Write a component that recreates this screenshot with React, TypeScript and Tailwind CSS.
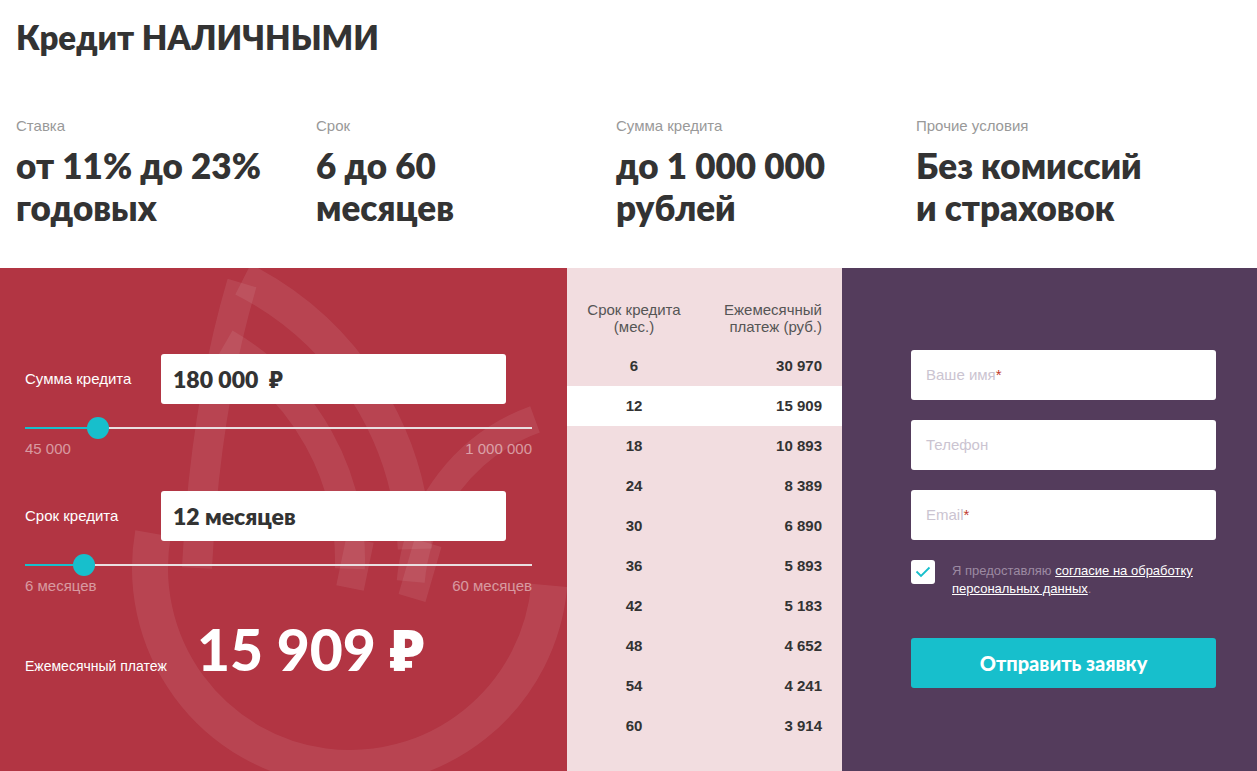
import React from "react";

const geo = { fontFamily: "Lato, 'Noto Sans', sans-serif" };
const arial = { fontFamily: "'Liberation Sans', Arial, sans-serif" };

const stats = [
  { label: "Ставка", value: ["от 11% до 23%", "годовых"] },
  { label: "Срок", value: ["6 до 60", "месяцев"] },
  { label: "Сумма кредита", value: ["до 1 000 000", "рублей"] },
  { label: "Прочие условия", value: ["Без комиссий", "и страховок"] },
];

const rows: [string, string][] = [
  ["6", "30 970"],
  ["12", "15 909"],
  ["18", "10 893"],
  ["24", "8 389"],
  ["30", "6 890"],
  ["36", "5 893"],
  ["42", "5 183"],
  ["48", "4 652"],
  ["54", "4 241"],
  ["60", "3 914"],
];

function arcPath(cx: number, cy: number, r: number, a0: number, a1: number) {
  const rad = (a: number) => (a * Math.PI) / 180;
  const x0 = cx + r * Math.cos(rad(a0));
  const y0 = cy + r * Math.sin(rad(a0));
  const x1 = cx + r * Math.cos(rad(a1));
  const y1 = cy + r * Math.sin(rad(a1));
  const large = Math.abs(a1 - a0) > 180 ? 1 : 0;
  const sweep = a1 > a0 ? 1 : 0;
  return `M ${x0} ${y0} A ${r} ${r} 0 ${large} ${sweep} ${x1} ${y1}`;
}

function Slider({ pos }: { pos: number }) {
  return (
    <div className="relative h-[22px] w-[507px]">
      <div className="absolute left-0 right-0 top-[10px] h-[2px] bg-[#e9dfe1]" />
      <div className="absolute left-0 top-[10px] h-[2px] bg-[#17bfcc]" style={{ width: pos }} />
      <div
        className="absolute top-0 h-[22px] w-[22px] rounded-full bg-[#17bfcc]"
        style={{ left: pos - 11 }}
      />
    </div>
  );
}

function Field({ children }: { children: React.ReactNode }) {
  return (
    <div
      className="h-[50px] w-[305px] rounded-[3px] bg-white px-[15px] flex items-center text-[15px] text-[#cbc4d1]"
      style={arial}
    >
      {children}
    </div>
  );
}

export default function App() {
  return (
    <div className="w-[1257px] h-[771px] overflow-hidden bg-white text-[#333]">
      {/* Title */}
      <div className="px-4 pt-[15px] h-[100px]">
        <h1 className="text-[33px] leading-[44px] font-extrabold text-[#333]" style={geo}>
          Кредит НАЛИЧНЫМИ
        </h1>
      </div>

      {/* Stats */}
      <div className="flex h-[168px] pl-4 pt-[17px]">
        {stats.map((s) => (
          <div key={s.label} className="w-[300px]">
            <div className="text-[15px] leading-[18px] text-[#999]" style={arial}>
              {s.label}
            </div>
            <div className="mt-[9px] text-[35px] leading-[42px] font-extrabold text-[#333]" style={geo}>
              {s.value[0]}
              <br />
              {s.value[1]}
            </div>
          </div>
        ))}
      </div>

      {/* Calculator section */}
      <div className="flex h-[503px]">
        {/* Red panel */}
        <div className="relative w-[567px] bg-[#b23543] overflow-hidden">
          <svg
            className="absolute inset-0 pointer-events-none"
            width="567"
            height="503"
            viewBox="0 0 567 503"
          >
            <g fill="none" stroke="#ffffff" strokeOpacity="0.08">
              <path d={arcPath(100, 292, 315, -63, -2)} strokeWidth="34" />
              <path d={arcPath(100, 292, 250, -60, 2)} strokeWidth="30" />
              <path d="M 242 15 Q 205 140 197 300" strokeWidth="30" />
              <path d={arcPath(350, 300, 200, 170, 355)} strokeWidth="36" transform="scale(1 -1) translate(0 -600)" />
              <path d={arcPath(600, 330, 190, 185, 250)} strokeWidth="28" />
              <path d="M 360 272 L 350 320" strokeWidth="28" />
              <path d="M 428 275 L 412 330" strokeWidth="28" />
            </g>
          </svg>

          <div className="relative px-[25px] pt-[86px] text-white" style={arial}>
            {/* Сумма */}
            <div className="flex items-center h-[50px]">
              <div className="w-[136px] text-[15px]">Сумма кредита</div>
              <div
                className="h-[50px] w-[345px] rounded-[3px] bg-white flex items-center px-[12px] text-[23px] font-extrabold text-[#333]"
                style={geo}
              >
                180 000&nbsp; ₽
              </div>
            </div>
            <div className="mt-[13px]">
              <Slider pos={73} />
            </div>
            <div className="mt-[2px] flex w-[507px] justify-between text-[15px] leading-[16px] text-white/50">
              <span>45 000</span>
              <span>1 000 000</span>
            </div>

            {/* Срок */}
            <div className="mt-[34px] flex items-center h-[50px]">
              <div className="w-[136px] text-[15px]">Срок кредита</div>
              <div
                className="h-[50px] w-[345px] rounded-[3px] bg-white flex items-center px-[12px] text-[23px] font-extrabold text-[#333]"
                style={geo}
              >
                12 месяцев
              </div>
            </div>
            <div className="mt-[13px]">
              <Slider pos={59} />
            </div>
            <div className="mt-[2px] flex w-[507px] justify-between text-[15px] leading-[16px] text-white/50">
              <span>6 месяцев</span>
              <span>60 месяцев</span>
            </div>

            {/* Result */}
            <div className="mt-[20px] flex items-baseline">
              <div className="w-[172px] text-[14px]">Ежемесячный платеж</div>
              <div className="text-[57px] leading-[70px] font-black text-white" style={geo}>
                15 909 ₽
              </div>
            </div>
          </div>
        </div>

        {/* Table */}
        <div className="w-[275px] bg-[#f2dde0] text-[#333]" style={arial}>
          <div className="flex pt-[33px] pb-[11px] text-[15px] leading-[17px] text-[#555]">
            <div className="w-[134px] text-center">
              Срок кредита
              <br />
              (мес.)
            </div>
            <div className="flex-1 pr-[20px] text-right">
              Ежемесячный
              <br />
              платеж (руб.)
            </div>
          </div>
          {rows.map(([m, p]) => (
            <div
              key={m}
              className={`flex h-[40px] items-center text-[15px] font-bold ${m === "12" ? "bg-white" : ""}`}
            >
              <div className="w-[134px] text-center">{m}</div>
              <div className="flex-1 pr-[20px] text-right">{p}</div>
            </div>
          ))}
        </div>

        {/* Form */}
        <div className="flex-1 bg-[#543c5c] pl-[69px] pt-[82px]" style={arial}>
          <div className="flex flex-col gap-[20px]">
            <Field>
              Ваше имя<span className="text-[#c0392b]">*</span>
            </Field>
            <Field>Телефон</Field>
            <Field>
              Email<span className="text-[#c0392b]">*</span>
            </Field>
          </div>
          <div className="mt-[20px] flex w-[305px]">
            <div className="h-[24px] w-[24px] shrink-0 rounded-[3px] bg-white flex items-center justify-center">
              <svg width="16" height="12" viewBox="0 0 16 12">
                <path d="M1.5 5.5 L6 10 L14.5 1.5" fill="none" stroke="#17bfcc" strokeWidth="1.8" />
              </svg>
            </div>
            <div className="ml-[17px] mt-[2px] text-[13px] leading-[18px] text-[#9c8aa2]">
              Я предоставляю{" "}
              <span className="text-white underline underline-offset-1">
                согласие на обработку персональных данных
              </span>
              .
            </div>
          </div>
          <button
            className="mt-[40px] h-[50px] w-[305px] rounded-[3px] bg-[#17bfcc] text-[20px] font-black text-white"
            style={geo}
          >
            Отправить заявку
          </button>
        </div>
      </div>
    </div>
  );
}
